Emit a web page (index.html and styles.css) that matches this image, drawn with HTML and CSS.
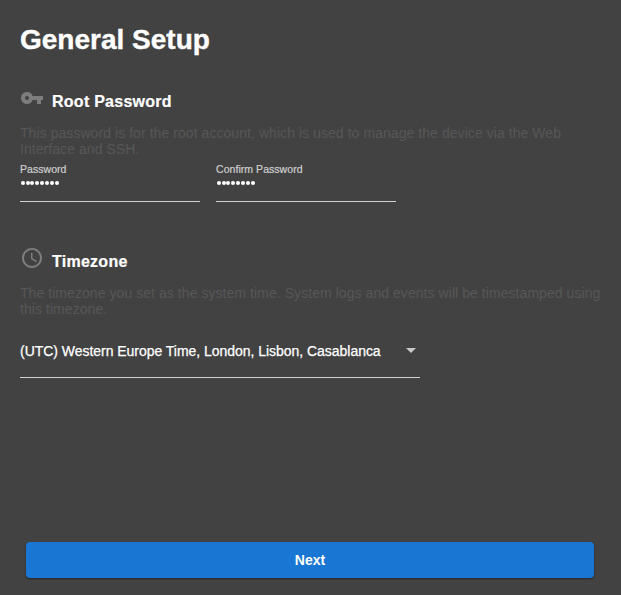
FILE: index.html
```html
<!DOCTYPE html>
<html lang="en">
<head>
<meta charset="utf-8">
<title>General Setup</title>
<link rel="stylesheet" href="styles.css">
</head>
<body>
<main class="setup">
  <h1 class="title">General Setup</h1>
  <section class="section section-password">
    <div class="heading">
      <svg class="icon" viewBox="0 0 24 24"><path d="M12.65 10A5.99 5.99 0 0 0 7 6c-3.31 0-6 2.69-6 6s2.69 6 6 6a5.99 5.99 0 0 0 5.65-4H17v4h4v-4h2v-4H12.65zM7 14c-1.1 0-2-.9-2-2s.9-2 2-2 2 .9 2 2-.9 2-2 2z"/></svg>
      <h2 class="name">Root Password</h2>
    </div>
    <p class="description"><span class="line">This password is for the root account, which is used to manage the device via the Web</span> <span class="line">Interface and SSH.</span></p>
    <div class="fields">
      <label class="field"><span class="label">Password</span><span class="dots"><i></i><i></i><i></i><i></i><i></i><i></i><i></i><i></i></span></label>
      <label class="field"><span class="label">Confirm Password</span><span class="dots"><i></i><i></i><i></i><i></i><i></i><i></i><i></i><i></i></span></label>
    </div>
  </section>
  <section class="section section-timezone">
    <div class="heading">
      <svg class="icon" viewBox="0 0 24 24"><path d="M11.99 2C6.47 2 2 6.48 2 12s4.47 10 9.99 10C17.52 22 22 17.52 22 12S17.52 2 11.99 2zM12 20c-4.42 0-8-3.58-8-8s3.58-8 8-8 8 3.58 8 8-3.58 8-8 8zm.5-13H11v6l5.25 3.15.75-1.23-4.5-2.67z"/></svg>
      <h2 class="name">Timezone</h2>
    </div>
    <p class="description"><span class="line">The timezone you set as the system time. System logs and events will be timestamped using</span> <span class="line">this timezone.</span></p>
    <div class="select"><span class="value">(UTC) Western Europe Time, London, Lisbon, Casablanca</span><span class="arrow"></span></div>
  </section>
  <button class="next" type="button">Next</button>
</main>
</body>
</html>
```
FILE: styles.css
```css
* { box-sizing: border-box; }
body {
  margin: 0;
  background: #424242;
  color: #fff;
  font-family: "Liberation Sans", Arial, sans-serif;
  font-size: 14px;
}
.setup {
  display: flex;
  flex-direction: column;
  height: 595px;
  padding: 24px 20px 17px;
}
h1, h2, p { margin: 0; }
.title { font-size: 28px; line-height: 32px; -webkit-text-stroke: .4px #fff; }
.section-password { margin-top: 30px; height: 160px; }
.heading { display: flex; height: 32px; gap: 8px; }
.icon { width: 24px; height: 24px; fill: #7d7d7d; }
.name { font-size: 16px; line-height: 18px; margin-top: 7px; letter-spacing: .26px; -webkit-text-stroke: .2px #fff; }
.description { margin-top: 7px; line-height: 16px; color: #575757; letter-spacing: .06px; }
.line { display: block; white-space: nowrap; }
.fields { display: flex; gap: 16px; margin-top: 5px; }
.field {
  display: flex;
  flex-direction: column;
  width: 180px;
  height: 40px;
  border-bottom: 1px solid #d0d0d0;
}
.label { font-size: 10.5px; line-height: 14px; color: #d0d0d0; letter-spacing: .05px; -webkit-text-stroke: .2px #d0d0d0; }
.dots { display: flex; gap: .9px; margin: 5px 0 0 .7px; }
.dots i { width: 4px; height: 4px; border-radius: 50%; background: #fff; }
.select {
  display: flex;
  justify-content: space-between;
  width: 400px;
  height: 41px;
  margin-top: 20px;
  padding: 6px 4px 0 0;
  line-height: 16px;
  border-bottom: 1px solid #d0d0d0;
}
.value { white-space: nowrap; letter-spacing: -.033px; -webkit-text-stroke: .25px #fff; }
.arrow {
  height: 5px;
  margin-top: 5px;
  border: 5px solid transparent;
  border-top-color: #c8c8c8;
  border-bottom: 0;
}
.next {
  margin: auto 7px 0 6px;
  height: 36px;
  border: 0;
  border-radius: 4px;
  background: #1976d2;
  color: #fff;
  font: bold 14px/36px "Liberation Sans", Arial, sans-serif;
  padding: 0;
  box-shadow: 0 1px 2px rgba(0, 0, 0, .45);
}
```
